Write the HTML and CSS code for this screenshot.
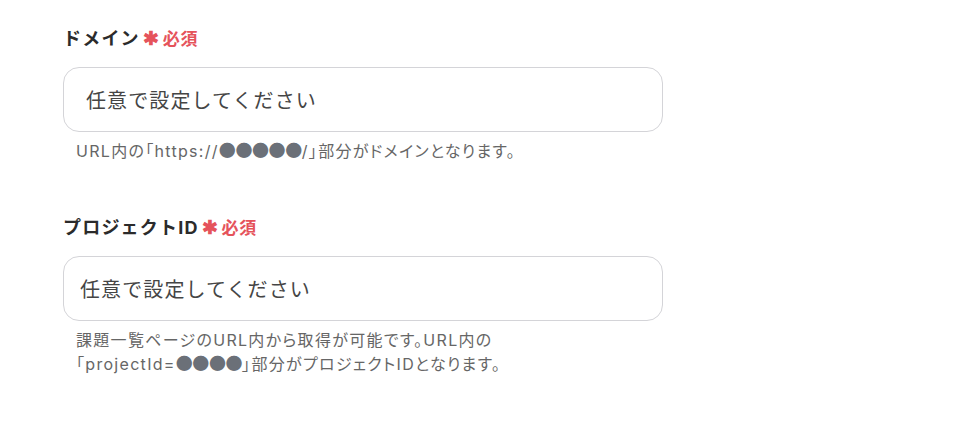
FILE: index.html
```html
<!DOCTYPE html>
<html lang="ja">
<head>
<meta charset="utf-8">
<link rel="stylesheet" href="styles.css">
</head>
<body>
<div class="form">
  <div class="field">
    <div class="label">ドメイン<span class="req"><span class="ast">✱</span>必須</span></div>
    <div class="input input-a">任意で設定してください</div>
    <div class="help">URL内の「https://<span class="dots">●●●●●</span>/」部分がドメインとなります。</div>
  </div>
  <div class="field field-2">
    <div class="label">プロジェクトID<span class="req"><span class="ast">✱</span>必須</span></div>
    <div class="input input-b">任意で設定してください</div>
    <div class="help">課題一覧ページのURL内から取得が可能です。URL内の<br>「projectId=<span class="dots">●●●●</span>」部分がプロジェクトIDとなります。</div>
  </div>
</div>
</body>
</html>
```
FILE: styles.css
```css
html, body {
  margin: 0;
  padding: 0;
  background: #ffffff;
}
body {
  font-family: "Inter", "Noto Sans CJK JP", sans-serif;
  color: #333333;
}
.form {
  padding: 26px 0 0 63px;
  width: 600px;
}
.field-2 {
  margin-top: 52px;
}
.label {
  font-size: 18px;
  font-weight: 700;
  line-height: 26px;
  letter-spacing: 1.2px;
  color: #2b2b2b;
  display: flex;
  align-items: center;
}
.req {
  color: #e5535b;
  font-size: 17px;
  font-weight: 700;
  margin-left: 3px;
  letter-spacing: 0.8px;
  display: flex;
  align-items: center;
}
.ast {
  font-size: 19px;
  margin-right: 3px;
}
.input {
  margin-top: 15px;
  box-sizing: border-box;
  height: 65px;
  border: 1px solid #d4d4d8;
  border-radius: 16px;
  font-size: 20px;
  color: #454545;
  display: flex;
  align-items: center;
  letter-spacing: 1.1px;
}
.input-a {
  padding-left: 22px;
}
.input-b {
  padding-left: 16px;
}
.help {
  margin-top: 7px;
  padding-left: 13px;
  font-size: 16px;
  line-height: 24px;
  color: #666666;
  font-feature-settings: "palt";
  letter-spacing: 1.3px;
}
.dots {
  font-family: "Noto Sans CJK JP", sans-serif;
  font-feature-settings: normal;
  font-size: 17px;
  line-height: 1;
  color: #6b7078;
  letter-spacing: -0.4px;
}
```
